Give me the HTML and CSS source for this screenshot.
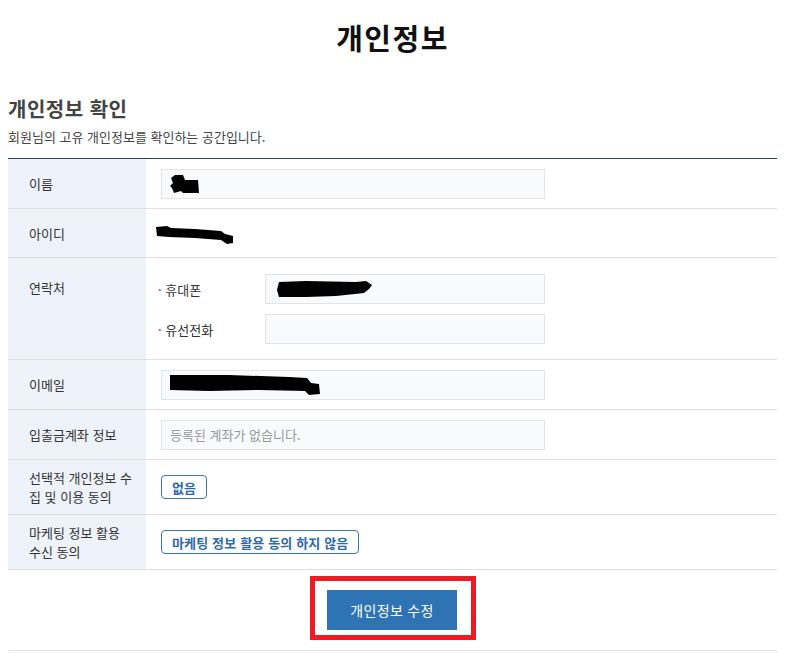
FILE: index.html
```html
<!DOCTYPE html>
<html lang="ko">
<head>
<meta charset="utf-8">
<title>개인정보</title>
<link rel="stylesheet" href="styles.css">
</head>
<body>
<div class="page">
  <h1 class="page-title">개인정보</h1>
  <h2 class="section-title">개인정보 확인</h2>
  <p class="section-desc">회원님의 고유 개인정보를 확인하는 공간입니다.</p>

  <div class="info-table">
    <div class="row">
      <div class="label">이름</div>
      <div class="value">
        <div class="field">
          <svg class="redact" width="32" height="20" viewBox="0 0 32 20"><path d="M2 4 L6 1 L14 1 L16 6 L29 6 L30 19 L14 19 L12 17 L5 19 L3 14 L1 12 L4 9 Z" fill="#000"/></svg>
        </div>
      </div>
    </div>
    <div class="row row-short">
      <div class="label">아이디</div>
      <div class="value">
        <svg class="redact redact-id" width="80" height="20" viewBox="0 0 80 20"><path d="M1 2 L12 1 L16 3 L40 4 L66 6 L70 9 L78 11 L78 18 L72 19 L66 15 L40 13 L14 12 L2 11 Z" fill="#000"/></svg>
      </div>
    </div>
    <div class="row row-contact">
      <div class="label label-top">연락처</div>
      <div class="value value-stack">
        <div class="sub-row">
          <span class="sub-label">· 휴대폰</span>
          <div class="field field-sub">
            <svg class="redact" width="98" height="18" viewBox="0 0 98 18"><path d="M3 2 L30 1 L80 2 L90 1 L96 5 L93 9 L88 13 L60 16 L30 17 L3 17 L1 10 Z" fill="#000"/></svg>
          </div>
        </div>
        <div class="sub-row">
          <span class="sub-label">· 유선전화</span>
          <div class="field field-sub"></div>
        </div>
      </div>
    </div>
    <div class="row">
      <div class="label">이메일</div>
      <div class="value">
        <div class="field">
          <svg class="redact" width="152" height="22" viewBox="0 0 152 22"><path d="M1 1 L60 1 L120 3 L138 4 L142 9 L150 10 L151 20 L140 21 L136 17 L90 16 L40 17 L1 16 Z" fill="#000"/></svg>
        </div>
      </div>
    </div>
    <div class="row">
      <div class="label">입출금계좌 정보</div>
      <div class="value">
        <div class="field field-empty">등록된 계좌가 없습니다.</div>
      </div>
    </div>
    <div class="row">
      <div class="label label-multi">선택적 개인정보 수<br>집 및 이용 동의</div>
      <div class="value">
        <span class="tag">없음</span>
      </div>
    </div>
    <div class="row">
      <div class="label label-multi">마케팅 정보 활용<br>수신 동의</div>
      <div class="value">
        <span class="tag">마케팅 정보 활용 동의 하지 않음</span>
      </div>
    </div>
  </div>

  <div class="actions">
    <div class="highlight">
      <button class="btn-primary" type="button">개인정보 수정</button>
    </div>
  </div>

  <div class="footer-box"></div>
</div>
</body>
</html>
```

FILE: styles.css
```css
html, body {
  margin: 0;
  padding: 0;
  background: #fff;
}
body {
  padding: 0 8px;
  font-family: "Noto Sans CJK KR", "Noto Sans", sans-serif;
  color: #333;
  overflow: hidden;
}
.page {
  width: 769px;
}
.page-title {
  margin: 0;
  padding-top: 16px;
  height: 42px;
  line-height: 42px;
  font-size: 29px;
  font-weight: 700;
  color: #111;
  text-align: center;
  letter-spacing: 1.5px;
}
.section-title {
  margin: 0;
  margin-top: 37px;
  line-height: 28px;
  font-size: 20px;
  font-weight: 700;
  color: #444;
  letter-spacing: 0.5px;
}
.section-desc {
  margin: 0;
  margin-top: 5px;
  line-height: 18px;
  font-size: 13px;
  color: #444;
}
.info-table {
  margin-top: 12px;
  border-top: 1px solid #2d3f63;
}
.row {
  display: grid;
  grid-template-columns: 138px 1fr;
  min-height: 49px;
  border-bottom: 1px solid #dedede;
}
.row-short {
  min-height: 48px;
}
.label {
  display: flex;
  align-items: center;
  padding: 8px 0 8px 21px;
  background: #eef2fa;
  font-size: 13px;
  line-height: 19px;
  color: #333;
}
.label-top {
  align-items: flex-start;
  padding-top: 20px;
}
.label-multi {
  display: block;
  padding-top: 8px;
  padding-bottom: 8px;
}
.value {
  display: flex;
  align-items: center;
  padding-left: 15px;
}
.value-stack {
  flex-direction: column;
  align-items: flex-start;
  gap: 10px;
  padding-top: 16px;
  padding-bottom: 15px;
}
.field {
  box-sizing: border-box;
  width: 384px;
  height: 30px;
  display: flex;
  align-items: center;
  padding-left: 7px;
  background: #f9fafc;
  border: 1px solid #e3e3e3;
  font-size: 13px;
  color: #999;
}
.field-sub {
  width: 280px;
  padding-left: 10px;
}
.field-empty {
  padding-left: 8px;
}
.redact {
  display: block;
}
.redact-id {
  margin-left: -6px;
  margin-top: 3px;
}
.sub-row {
  display: flex;
  align-items: center;
}
.sub-label {
  width: 107px;
  margin-left: -3px;
  font-size: 13px;
  color: #333;
}
.tag {
  box-sizing: border-box;
  height: 24px;
  display: inline-flex;
  align-items: center;
  padding: 0 10px;
  border: 1px solid #3a74b4;
  border-radius: 4px;
  font-size: 13px;
  font-weight: 700;
  color: #2c69ac;
  letter-spacing: 0.15px;
}
.actions {
  display: flex;
  justify-content: center;
  padding-top: 6px;
}
.highlight {
  margin-left: 1px;
  padding: 9px 14px 5px 12px;
  border: 5px solid #ed1c24;
}
.btn-primary {
  display: block;
  width: 130px;
  height: 40px;
  margin: 0;
  padding: 0;
  border: none;
  background: #2e74b5;
  color: #fff;
  font-family: "Noto Sans CJK KR", "Noto Sans", sans-serif;
  font-size: 14px;
  letter-spacing: 0.3px;
}
.footer-box {
  margin-top: 10px;
  height: 2px;
  border-top: 1px solid #e6e6e6;
  border-left: 1px solid #eee;
  border-right: 1px solid #eee;
  background: #fbfbfb;
}
```
